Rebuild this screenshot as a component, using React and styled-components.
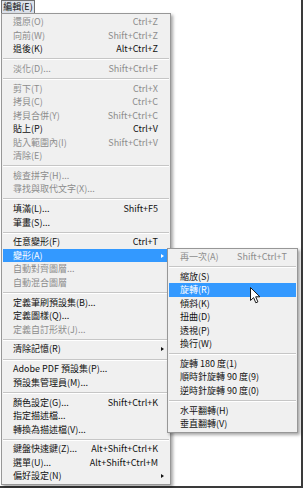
import React from 'react';
import styled, { createGlobalStyle } from 'styled-components';

const Global = createGlobalStyle`
  html, body { margin: 0; padding: 0; background: #fff; }
  body { font-family: "Noto Sans CJK TC", "Noto Sans", sans-serif; }
`;

const Frame = styled.div`
  box-sizing: border-box;
  width: 303px;
  height: 488px;
  padding-left: 1px;
  background: #fff;
  border-right: 2px solid #3a3a3a;
  border-bottom: 2px solid #3a3a3a;
  display: flex;
  flex-direction: column;
  align-items: flex-start;
`;

const MenuTitle = styled.div`
  box-sizing: border-box;
  width: 34px;
  height: 13px;
  border: 1px solid #6f6f6f;
  border-bottom: none;
  background: #dde2ea;
  color: #111;
  font-size: 9px;
  line-height: 12px;
  text-align: center;
  white-space: nowrap;
`;

const Menu = styled.div`
  position: relative;
  box-sizing: border-box;
  width: ${p => p.$w}px;
  border: 1px solid #979797;
  background: #f0f0f0;
  padding: 1px;
  box-shadow: 2px 2px 3px rgba(0, 0, 0, 0.35);
`;

const SubMenu = styled(Menu)`
  position: absolute;
  top: -1px;
  left: calc(100% - 2px);
  z-index: 2;
`;

const Item = styled.div`
  position: relative;
  display: grid;
  grid-template-columns: 1fr auto ${p => p.$trail}px;
  align-items: center;
  height: 13.5px;
  padding-left: ${p => p.$lead}px;
  font-size: 9px;
  line-height: 13.5px;
  white-space: nowrap;
  color: ${p => (p.$active ? '#fff' : p.$disabled ? '#8c8c8c' : '#111')};
  background: ${p => (p.$active ? '#3399ff' : 'transparent')};
`;

const Label = styled.span``;

const Shortcut = styled.span`
  text-align: right;
`;

const Arrow = styled.span`
  justify-self: start;
  margin-left: 3px;
  width: 0;
  height: 0;
  border-top: 2.5px solid transparent;
  border-bottom: 2.5px solid transparent;
  border-left: 3px solid ${p => (p.$active ? '#fff' : '#111')};
`;

const Separator = styled.div`
  height: 1px;
  margin: 2.65px 0;
  background: #c6c6c6;
  box-shadow: 0 1px 0 #ffffff;
`;

const Cursor = styled.svg`
  position: absolute;
  left: 81px;
  top: 4px;
  width: 11px;
  height: 17px;
  z-index: 3;
`;

const SEP = { sep: true };

const mainItems = [
  { l: '還原(O)', s: 'Ctrl+Z', d: true },
  { l: '向前(W)', s: 'Shift+Ctrl+Z', d: true },
  { l: '退後(K)', s: 'Alt+Ctrl+Z' },
  SEP,
  { l: '淡化(D)...', s: 'Shift+Ctrl+F', d: true },
  SEP,
  { l: '剪下(T)', s: 'Ctrl+X', d: true },
  { l: '拷貝(C)', s: 'Ctrl+C', d: true },
  { l: '拷貝合併(Y)', s: 'Shift+Ctrl+C', d: true },
  { l: '貼上(P)', s: 'Ctrl+V' },
  { l: '貼入範圍內(I)', s: 'Shift+Ctrl+V', d: true },
  { l: '清除(E)', d: true },
  SEP,
  { l: '檢查拼字(H)...', d: true },
  { l: '尋找與取代文字(X)...', d: true },
  SEP,
  { l: '填滿(L)...', s: 'Shift+F5' },
  { l: '筆畫(S)...' },
  SEP,
  { l: '任意變形(F)', s: 'Ctrl+T' },
  { l: '變形(A)', sub: true, active: true, open: true },
  { l: '自動對齊圖層...', d: true },
  { l: '自動混合圖層', d: true },
  SEP,
  { l: '定義筆刷預設集(B)...' },
  { l: '定義圖樣(Q)...' },
  { l: '定義自訂形狀(J)...', d: true },
  SEP,
  { l: '清除記憶(R)', sub: true },
  SEP,
  { l: 'Adobe PDF 預設集(P)...' },
  { l: '預設集管理員(M)...' },
  SEP,
  { l: '顏色設定(G)...', s: 'Shift+Ctrl+K' },
  { l: '指定描述檔...' },
  { l: '轉換為描述檔(V)...' },
  SEP,
  { l: '鍵盤快速鍵(Z)...', s: 'Alt+Shift+Ctrl+K' },
  { l: '選單(U)...', s: 'Alt+Shift+Ctrl+M' },
  { l: '偏好設定(N)', sub: true },
];

const subItems = [
  { l: '再一次(A)', s: 'Shift+Ctrl+T', d: true },
  SEP,
  { l: '縮放(S)' },
  { l: '旋轉(R)', active: true, cursor: true },
  { l: '傾斜(K)' },
  { l: '扭曲(D)' },
  { l: '透視(P)' },
  { l: '換行(W)' },
  SEP,
  { l: '旋轉 180 度(1)' },
  { l: '順時針旋轉 90 度(9)' },
  { l: '逆時針旋轉 90 度(0)' },
  SEP,
  { l: '水平翻轉(H)' },
  { l: '垂直翻轉(V)' },
];

function MouseCursor() {
  return (
    <Cursor viewBox="0 0 11 17">
      <path
        d="M0.5 0.5 L0.5 13.5 L3.6 10.6 L5.8 15.8 L7.9 14.9 L5.7 9.8 L9.9 9.8 Z"
        fill="#fff"
        stroke="#1a1a1a"
        strokeWidth="1"
        strokeLinejoin="round"
      />
    </Cursor>
  );
}

function MenuList({ items, lead, trail, renderSub }) {
  return items.map((it, i) =>
    it.sep ? (
      <Separator key={i} />
    ) : (
      <Item key={i} $lead={lead} $trail={trail} $disabled={it.d} $active={it.active}>
        <Label>{it.l}</Label>
        <Shortcut>{it.s || ''}</Shortcut>
        {it.sub ? <Arrow $active={it.active} /> : <span />}
        {it.open && renderSub ? renderSub() : null}
        {it.cursor ? <MouseCursor /> : null}
      </Item>
    )
  );
}

export default function App() {
  return (
    <>
      <Global />
      <Frame>
        <MenuTitle>編輯(E)</MenuTitle>
        <Menu $w={170}>
          <MenuList
            items={mainItems}
            lead={10}
            trail={11}
            renderSub={() => (
              <SubMenu $w={131}>
                <MenuList items={subItems} lead={11} trail={9} />
              </SubMenu>
            )}
          />
        </Menu>
      </Frame>
    </>
  );
}
